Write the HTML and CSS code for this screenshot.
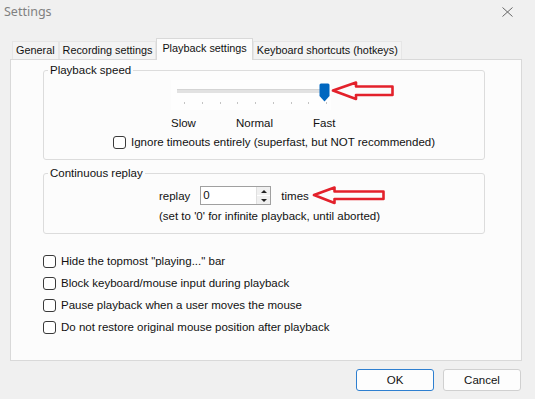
FILE: index.html
```html
<!DOCTYPE html>
<html lang="en">

<head>
    <meta charset="UTF-8">
    <meta name="viewport" content="width=device-width, initial-scale=1.0">
    <title>Settings</title>
    <link rel="stylesheet" href="styles.css">
</head>

<body>
    <div class="window">
        <div class="titlebar">
            <span class="title">Settings</span>
            <svg class="close" width="11" height="10" viewBox="0 0 11 10">
                <path d="M0.5 0.5 L10.5 9.5 M10.5 0.5 L0.5 9.5" stroke="#666" stroke-width="1" fill="none" />
            </svg>
        </div>

        <div class="tabs">
            <div class="tab">General</div>
            <div class="tab">Recording settings</div>
            <div class="tab active">Playback settings</div>
            <div class="tab">Keyboard shortcuts (hotkeys)</div>
        </div>

        <div class="panel">
            <fieldset class="group speed">
                <legend>Playback speed</legend>
                <div class="slider-row">
                    <div class="slider">
                        <div class="track"></div>
                        <div class="ticks">
                            <i></i><i></i><i></i><i></i><i></i><i></i><i></i><i></i><i></i>
                        </div>
                        <svg class="thumb" width="11" height="19" viewBox="0 0 11 19">
                            <path d="M0.5 2 Q0.5 0.5 2 0.5 H9 Q10.5 0.5 10.5 2 V13 L5.5 18.5 L0.5 13 Z" fill="#0067c0" />
                        </svg>
                    </div>
                    <!-- annotation arrow -->
                    <svg class="arrow" width="64" height="20" viewBox="0 0 64 20">
                        <path d="M2 9.5 L25 1.5 V5.5 H61.5 V14 H25 V18 Z" fill="none" stroke="#e3212b" stroke-width="2.6" stroke-linejoin="round" />
                    </svg>
                </div>
                <div class="scale">
                    <span>Slow</span>
                    <span>Normal</span>
                    <span>Fast</span>
                </div>
                <label class="check ignore"><span class="box"></span>Ignore timeouts entirely (superfast, but NOT recommended)</label>
            </fieldset>

            <fieldset class="group replay">
                <legend>Continuous replay</legend>
                <div class="replay-row">
                    <span>replay</span>
                    <div class="spin">
                        <span class="value">0</span>
                        <div class="spin-btns">
                            <span class="up"></span>
                            <span class="down"></span>
                        </div>
                    </div>
                    <span>times</span>
                    <svg class="arrow" width="74" height="19" viewBox="0 0 74 19">
                        <path d="M2 9 L22.5 1.5 V5.5 H71.5 V13 H22.5 V17 Z" fill="none" stroke="#e3212b" stroke-width="2.6" stroke-linejoin="round" />
                    </svg>
                </div>
                <div class="hint">(set to '0' for infinite playback, until aborted)</div>
            </fieldset>

            <div class="options">
                <label class="check"><span class="box"></span>Hide the topmost "playing..." bar</label>
                <label class="check"><span class="box"></span>Block keyboard/mouse input during playback</label>
                <label class="check"><span class="box"></span>Pause playback when a user moves the mouse</label>
                <label class="check"><span class="box"></span>Do not restore original mouse position after playback</label>
            </div>
        </div>

        <div class="footer">
            <button class="btn default">OK</button>
            <button class="btn">Cancel</button>
        </div>
    </div>
</body>

</html>
```

FILE: styles.css
```css
body {
    margin: 0;
    background-color: #f0f0f0;
    font-family: "Liberation Sans", Arial, sans-serif;
    font-size: 11.5px;
    color: #111;
}

.window {
    width: 535px;
    height: 399px;
    overflow: hidden;
}

.titlebar {
    height: 38px;
    display: flex;
    justify-content: space-between;
    align-items: flex-start;
    padding: 4px 22px 0 4px;
    box-sizing: border-box;
}

.title {
    font-family: "Noto Sans", sans-serif;
    font-size: 12.5px;
    line-height: 16px;
    color: #808080;
}

.close {
    margin-top: 3px;
}

.tabs {
    display: flex;
    align-items: flex-end;
    height: 21px;
    margin-left: 12px;
    font-size: 10.85px;
}

.tab {
    height: 17px;
    line-height: 17px;
    padding: 0 3px;
    border: 1px solid #e6e6e6;
    border-bottom: none;
    background-color: #f3f3f3;
}

.tab.active {
    height: 21px;
    line-height: 19px;
    padding: 0 5px;
    border-color: #d9d9d9;
    background-color: #fcfcfc;
    position: relative;
    z-index: 1;
    margin-bottom: -1px;
}

.panel {
    margin: 0 13px 0 10px;
    height: 302px;
    box-sizing: border-box;
    border: 1px solid #d9d9d9;
    background-color: #fcfcfc;
    padding-top: 3px;
}

.group {
    margin: 0 0 0 32px;
    width: 442px;
    box-sizing: border-box;
    border: 1px solid #dcdcdc;
    border-radius: 3px;
    padding: 3px 0 9px 0;
    min-width: 0;
}

.group legend {
    margin-left: 4px;
    padding: 0 2px;
    line-height: 14px;
}

.slider-row {
    display: flex;
    align-items: flex-start;
    margin-left: 127px;
    height: 30px;
}

.slider {
    position: relative;
    width: 160px;
    height: 30px;
    background-color: #fefefe;
}

.track {
    position: absolute;
    left: 6px;
    top: 9px;
    width: 152px;
    height: 3px;
    background-color: #e2e2e2;
    border-top: 1px solid #d5d5d5;
}

.ticks {
    position: absolute;
    left: 13px;
    top: 22px;
    width: 143px;
    display: flex;
    justify-content: space-between;
}

.ticks i {
    width: 1px;
    height: 2px;
    background-color: #c4c4c4;
}

.thumb {
    position: absolute;
    left: 148px;
    top: 3px;
}

.slider-row .arrow {
    margin-top: 1px;
}

.scale {
    display: flex;
    gap: 40px;
    margin: 6px 0 0 127px;
    line-height: 14px;
}

.check {
    display: flex;
    align-items: center;
    gap: 5px;
    height: 16px;
}

.box {
    width: 11px;
    height: 11px;
    border: 1px solid #3a3a3a;
    border-radius: 3px;
    background-color: #fff;
}

.ignore {
    margin: 4px 0 0 69px;
}

.replay {
    margin-top: 6px;
    padding: 6px 0 10px 0;
}

.replay-row {
    display: flex;
    align-items: center;
    gap: 10px;
    padding-left: 115px;
    height: 19px;
}

.replay-row .arrow {
    margin-left: -7px;
}

.spin {
    display: flex;
    width: 71px;
    height: 19px;
    box-sizing: border-box;
    border: 1px solid #a0a0a0;
    background-color: #fff;
}

.spin .value {
    flex: 1;
    padding-left: 2px;
    line-height: 16px;
}

.spin-btns {
    width: 13px;
    display: flex;
    flex-direction: column;
    border-left: 1px solid #e0e0e0;
}

.spin-btns span {
    flex: 1;
    background-color: #f0f0f0;
    display: flex;
    align-items: center;
    justify-content: center;
}

.spin-btns .up {
    border-bottom: 1px solid #fff;
}

.spin-btns .up::after {
    content: "";
    border: 3px solid transparent;
    border-bottom: 3px solid #222;
    border-top: none;
}

.spin-btns .down::after {
    content: "";
    border: 3px solid transparent;
    border-top: 3px solid #222;
    border-bottom: none;
}

.hint {
    margin: 4px 0 0 115px;
    line-height: 14px;
}

.options {
    margin: 16px 0 0 32px;
}

.options .check {
    height: 22px;
}

.footer {
    display: flex;
    justify-content: flex-end;
    gap: 9px;
    padding-right: 14px;
    margin-top: 8px;
}

.btn {
    width: 78px;
    height: 22px;
    font-family: "Liberation Sans", Arial, sans-serif;
    font-size: 11.5px;
    color: #111;
    background-color: #fdfdfd;
    border: 1px solid #d0d0d0;
    border-radius: 3px;
    padding: 0;
}

.btn.default {
    border-color: #2e7fd0;
}
```
